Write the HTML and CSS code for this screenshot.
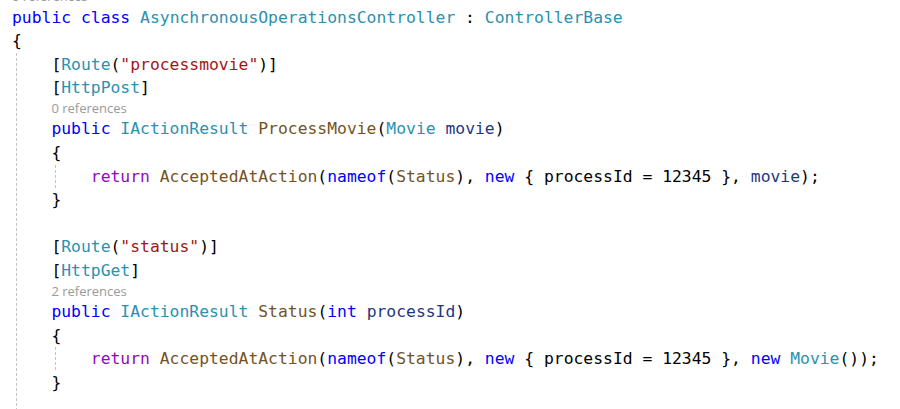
FILE: index.html
```html
<!DOCTYPE html>
<html>
<head>
<meta charset="utf-8">
<link rel="stylesheet" href="styles.css">
</head>
<body>
<div class="code">
  <div class="lens first">0 references</div>
  <div class="ln"><span class="kw">public</span> <span class="kw">class</span> <span class="ty">AsynchronousOperationsController</span> : <span class="ty">ControllerBase</span></div>
  <div class="ln">{</div>
  <div class="blk">
    <div class="ln">[<span class="ty">Route</span>(<span class="str">"processmovie"</span>)]</div>
    <div class="ln">[<span class="ty">HttpPost</span>]</div>
    <div class="lens">0 references</div>
    <div class="ln"><span class="kw">public</span> <span class="ty">IActionResult</span> <span class="me">ProcessMovie</span>(<span class="ty">Movie</span> <span class="pa">movie</span>)</div>
    <div class="ln">{</div>
    <div class="blk">
      <div class="ln"><span class="ctl">return</span> <span class="me">AcceptedAtAction</span>(<span class="kw">nameof</span>(<span class="me">Status</span>), <span class="kw">new</span> { processId = 12345 }, <span class="pa">movie</span>);</div>
    </div>
    <div class="ln">}</div>
    <div class="ln"></div>
    <div class="ln">[<span class="ty">Route</span>(<span class="str">"status"</span>)]</div>
    <div class="ln">[<span class="ty">HttpGet</span>]</div>
    <div class="lens">2 references</div>
    <div class="ln"><span class="kw">public</span> <span class="ty">IActionResult</span> <span class="me">Status</span>(<span class="kw">int</span> <span class="pa">processId</span>)</div>
    <div class="ln">{</div>
    <div class="blk">
      <div class="ln"><span class="ctl">return</span> <span class="me">AcceptedAtAction</span>(<span class="kw">nameof</span>(<span class="me">Status</span>), <span class="kw">new</span> { processId = 12345 }, <span class="kw">new</span> <span class="ty">Movie</span>());</div>
    </div>
    <div class="ln">}</div>
    <div class="ln"></div>
  </div>
</div>
</body>
</html>
```

FILE: styles.css
```css
html, body {
  margin: 0;
  padding: 0;
  background: #ffffff;
  overflow: hidden;
}

.code {
  padding-left: 12px;
  margin-top: -11.8px;
  font-family: "DejaVu Sans Mono", monospace;
  font-size: 16.36px;
  color: #000000;
}

.ln {
  height: 23.6px;
  line-height: 23.6px;
  white-space: pre;
}

.lens {
  height: 17.4px;
  line-height: 17.4px;
  font-family: "Open Sans", sans-serif;
  font-size: 13px;
  color: #9a9a9a;
  white-space: pre;
}

.blk {
  padding-left: 4ch;
  background-image: repeating-linear-gradient(to bottom, #c4c4c4 0 3px, transparent 3px 5px);
  background-repeat: no-repeat;
  background-size: 1px 100%;
  background-position: 4px 0;
}

.kw { color: #0000ff; }
.ty { color: #2b91af; }
.str { color: #a31515; }
.me { color: #74531f; }
.ctl { color: #8f08c4; }
.pa { color: #1f377f; }
```
